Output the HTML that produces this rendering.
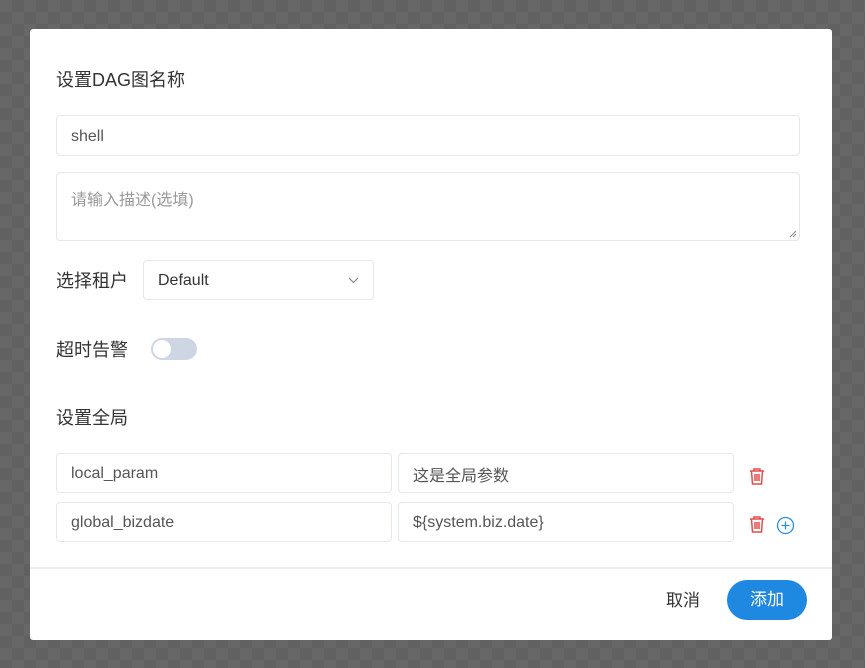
<!DOCTYPE html>
<html><head><meta charset="utf-8"><style>
*{box-sizing:border-box;margin:0;padding:0}
body{width:865px;height:668px;overflow:hidden;font-family:"Liberation Sans","Noto Sans CJK SC",sans-serif;
background-color:#676767;background-image:linear-gradient(45deg,#616161 25%,transparent 25%,transparent 75%,#616161 75%),linear-gradient(45deg,#616161 25%,transparent 25%,transparent 75%,#616161 75%);background-size:24px 24px;background-position:0 0,12px 12px;position:relative}
.m{position:absolute;left:30px;top:29px;width:802px;height:611px;background:#fff;border-radius:3px}
.a{position:absolute;font-size:18px;color:#333;line-height:1.2}
.i{position:absolute;border:1px solid #e4e7ed;border-radius:4px;background:#fff;font-size:16px;color:#555;padding-left:14px;padding-top:2px;display:flex;align-items:center}
.ph{color:#999}
.foot{position:absolute;left:0;right:0;top:538px;border-top:2px solid #eceef2}
</style></head><body>
<div class="m">
<div class="a" style="left:26px;top:41px">设置DAG图名称</div>
<div class="i" style="left:26px;top:86px;width:744px;height:41px">shell</div>
<div class="i ph" style="left:26px;top:143px;width:744px;height:69px;align-items:flex-start;padding-top:13px">请输入描述(选填)
<svg style="position:absolute;right:2px;bottom:2px" width="8" height="8"><path d="M1 7L7 1M4 7L7 4" stroke="#888" stroke-width="1"/></svg></div>
<div class="a" style="left:26px;top:242px">选择租户</div>
<div class="i" style="left:113px;top:231px;width:231px;height:40px;color:#333">Default
<svg style="position:absolute;right:14px;top:16px" width="11" height="7"><path d="M1 1L5.5 5.5L10 1" fill="none" stroke="#888" stroke-width="1.2"/></svg></div>
<div class="a" style="left:26px;top:311px">超时告警</div>
<div style="position:absolute;left:121px;top:309px;width:46px;height:22px;border-radius:11px;background:#cfd6e3"><div style="position:absolute;left:2px;top:2px;width:18px;height:18px;border-radius:50%;background:#fff"></div></div>
<div class="a" style="left:26px;top:379px">设置全局</div>
<div class="i" style="left:26px;top:424px;width:336px;height:40px">local_param</div>
<div class="i" style="left:368px;top:424px;width:336px;height:40px">这是全局参数</div>
<div class="i" style="left:26px;top:473px;width:336px;height:40px">global_bizdate</div>
<div class="i" style="left:368px;top:473px;width:336px;height:40px">${system.biz.date}</div>
<svg style="position:absolute;left:718px;top:438px" width="18" height="19" viewBox="0 0 18 19"><path d="M2 4H16M6 4V2H12V4M3.5 4L4.5 17H13.5L14.5 4M7 7V14M9 7V14M11 7V14" fill="none" stroke="#e74c4c" stroke-width="1.5"/></svg>
<svg style="position:absolute;left:718px;top:486px" width="18" height="19" viewBox="0 0 18 19"><path d="M2 4H16M6 4V2H12V4M3.5 4L4.5 17H13.5L14.5 4M7 7V14M9 7V14M11 7V14" fill="none" stroke="#e74c4c" stroke-width="1.5"/></svg>
<svg style="position:absolute;left:746px;top:487px" width="19" height="19" viewBox="0 0 19 19"><circle cx="9.5" cy="9.5" r="8" fill="none" stroke="#2d8ee0" stroke-width="1.3"/><path d="M9.5 5.5V13.5M5.5 9.5H13.5" stroke="#2d8ee0" stroke-width="1.3"/></svg>
<div class="foot"></div>
<div class="a" style="left:636px;top:562px;font-size:17px">取消</div>
<div style="position:absolute;left:697px;top:551px;width:80px;height:40px;border-radius:20px;background:#1f88e0;color:#fff;font-size:17px;line-height:40px;text-align:center">添加</div>
</div>
</body></html>
